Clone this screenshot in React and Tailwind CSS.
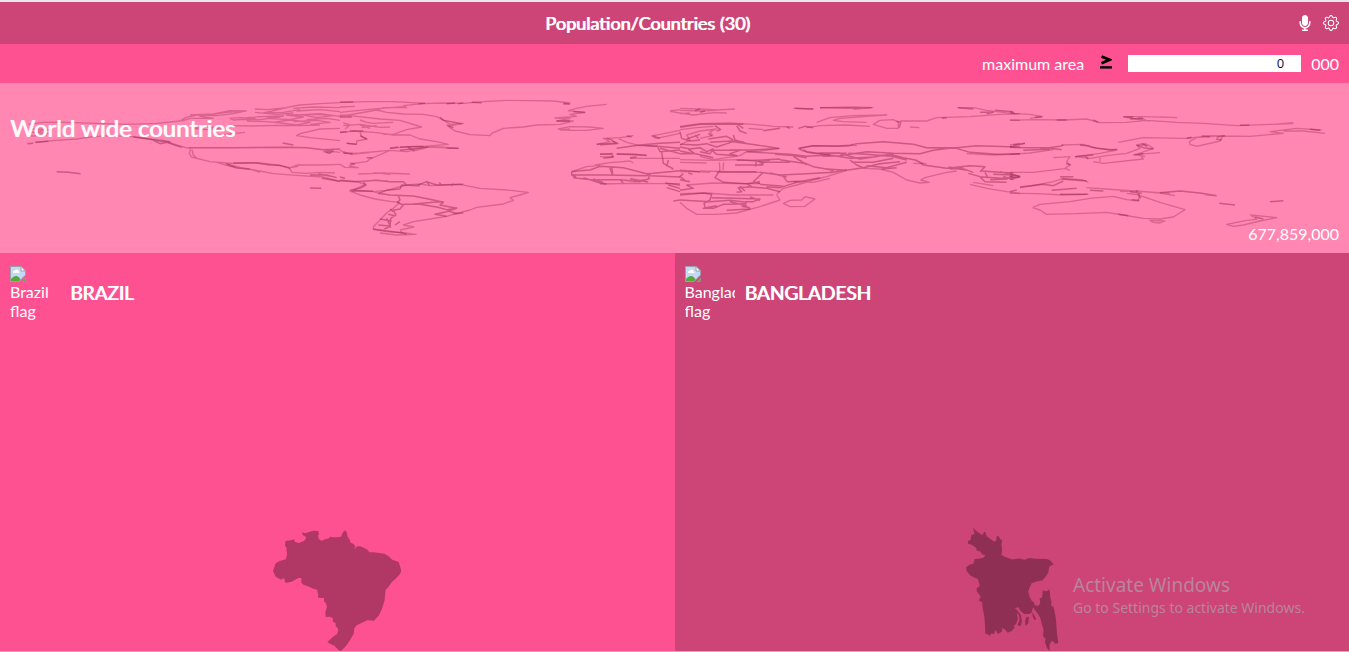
import { FaMicrophone } from "react-icons/fa";
import { BsGear } from "react-icons/bs";

const worldOutline = [
  {
    offset: 0,
    faint: [
      "M85 118L130 112 200 112 290 115 380 118 470 115 540 108 556 98 590 90 640 88",
      "M90 132L150 134 96 142 150 146 M82 154L140 150",
      "M106 172L160 167 230 162 280 155 340 152 400 155 450 162 490 166 530 180 565 190",
      "M545 108L570 100 640 100 600 94 680 82 735 78 700 86 650 92 610 92",
      "M570 90L640 87 690 77 740 78",
      "M690 100L720 98 765 101 700 105Z M740 98L800 94 840 96 780 104 720 104",
      "M765 72L800 74 860 68 790 84 850 82 900 74 M765 82L830 88 880 84 M860 67L900 60 960 56 1020 53",
      "M775 95L850 93 800 100 870 104 910 96 860 90 950 88 1000 92 950 98 900 88",
      "M820 112L870 105 930 112 890 120 840 114 M880 110L950 106 990 112 930 118",
      "M880 70L940 66 1020 68 M890 78L960 74 1020 80 M900 90L960 86 1020 94 M920 104L980 100 1020 106",
      "M740 108L800 110 860 116 M690 122L760 123 830 121 900 122 960 120",
      "M580 130L620 125 660 130 620 134Z M650 152L690 147 735 142",
      "M1020 130L960 132 900 146 890 152 930 158 990 164 1020 167",
      "M572 190L568 205 574 216 630 230 700 235 770 233 830 240 870 248",
      "M576 194L580 210 590 218",
      "M650 232L690 244 740 250 780 262 M675 235L720 247 780 258 820 266 900 272 970 276 1020 290",
      "M1020 238L960 240 890 240 868 250 876 262 920 265 960 262 1005 264",
      "M870 248L895 244 M980 203L1000 200 1020 202",
    ],
    strong: [
      "M82 176L100 175", "M106 172L145 169", "M170 260L205 262 242 266",
      "M400 156L450 163 500 172 545 187", "M460 166L510 170 480 176Z",
      "M565 188L700 188 860 187 920 188 970 194 1020 192",
      "M700 234L770 234 810 240 840 241 870 250", "M680 237L710 249 750 253",
      "M848 174L880 180", "M972 200L1000 196 988 205Z",
      "M930 270L980 270 1010 278 M955 267L990 273 M965 280L1020 289", "M930 309L964 310",
    ],
  },
  {
    offset: 1020,
    faint: [
      "M0 52L80 50 160 50 255 55 190 62 200 68 130 68 110 75 140 82 190 87 250 88 290 95 310 105 330 118 370 115 325 124 345 138 390 149 450 152 455 145 490 130 550 126 590 120 660 118 700 108 650 108 690 100 645 99 710 94 690 88 735 83 685 77 710 70 740 64 800 58",
      "M250 56L310 54 370 55 430 50 500 46 570 47 640 48 690 54 670 58",
      "M0 66L45 64 M0 82L50 77 120 70 190 65 M0 94L60 84 110 75 M0 90L50 94 120 102 180 106 245 126 200 134 160 148 130 148",
      "M10 122L60 118 120 127 150 126 M60 105L80 112 100 115 160 112 M60 120L90 130 M65 128L110 122",
      "M0 143L40 138 110 143 160 150 210 150 240 162 290 170 325 178 250 184 210 185 150 190",
      "M10 114L30 120 15 132 M60 140L65 155 82 162 50 168 50 178 20 175",
      "M0 195L15 205 60 204 150 196 200 200 265 186 355 190 300 186 250 184 M200 184L220 198 260 188",
      "M10 200L35 208 90 203 M150 196L90 222 80 230 40 235 28 243 55 248 15 247 0 238",
      "M55 267L125 264 210 267 M100 263L150 268",
      "M0 285L50 290 75 298 40 316 100 320 120 326",
      "M28 318L60 330 105 342 150 349 180 352",
      "M100 320L140 316 200 300 240 297 270 302 360 298 420 310 500 315 565 322 540 330 510 338 520 346 490 357 410 367 390 375 350 385 320 394 270 402 220 410 190 420 222 426 180 435",
      "M655 132L690 125 750 126 790 130 740 136 690 136Z M660 135L690 132",
      "M180 352L160 370 140 384 120 405 100 425 100 433 140 440 190 443 228 448 170 450 120 444",
      "M990 78L1020 74 M990 79L1020 84 M1020 136L960 148 935 153 950 160 1020 145",
      "M770 178L810 170 790 160 840 158 870 154 M780 180L835 176 815 167",
      "M780 208L820 205 M780 215L820 216 M830 207L880 207 920 212 M870 220L1020 220",
      "M860 155L880 152 M835 160L860 172 900 182 950 184",
      "M765 240L810 233 870 228 880 234 M695 260L740 245 780 241 M780 297L870 295 950 296 1020 296",
    ],
    strong: [
      "M0 52L40 51 M235 56L255 55 M320 56L345 54 M355 56L370 53 M395 52L425 53 M670 55L690 58",
      "M300 97L310 106 365 116 M320 120L340 128", "M650 108L690 108 M700 80L735 82",
      "M0 96L35 96 M0 142L20 140 M30 138L70 138",
      "M60 152L80 162 M20 175L50 178 M150 190L175 186 M180 186L250 184 M180 196L265 186 M320 190L355 190 M205 186L222 196",
      "M30 235L45 238 M80 218L98 218 M10 204L38 206 M0 276L15 280",
      "M0 287L45 290 110 286 150 290 190 290 200 300 240 302 M120 287L145 289",
      "M70 292L78 300 60 310 30 316 M35 319L65 317 100 319",
      "M115 325L140 316 180 312 185 300 230 302 260 290 290 300 370 298",
      "M258 288L268 300 M298 292L305 302 M340 296L335 303",
      "M115 325L150 330 220 333 280 345 310 352 300 360 350 370 320 380 285 388 320 394 M350 368L325 378 355 387",
      "M175 333L180 345 172 352 190 360 180 372 160 376 168 390 152 400 150 425 133 432",
      "M190 358L240 358 290 366 M220 357L280 352 310 350 M290 366L320 374 350 370",
      "M150 372L160 380 M145 388L165 392 M120 402L155 408 M115 420L150 423 M100 432L180 443 200 446 M140 400L152 428 M180 410L165 420",
      "M180 440L195 447 M340 386L370 384",
      "M770 178L830 175 810 162 M800 160L820 166 M860 153L875 155",
      "M780 207L815 208 820 216 790 220 M830 190L900 180 950 184 1020 190 M900 180L960 175 1020 172 M940 153L960 160",
      "M830 207L920 211 M870 218L890 216 M950 180L960 200 1020 195 M960 190L1020 206 M965 200L970 235 1000 252 M985 225L980 245",
      "M695 260L720 257 750 255 780 244 850 248 920 266 940 265 1020 257 M695 260L695 270 710 280 700 268",
      "M808 245L818 270 M815 245L818 268 M695 270L800 270 920 272 930 266",
      "M700 278L760 285 800 284 840 284 900 290 930 280 M730 278L780 294 800 297 M760 282L790 293 M840 284L850 294 M870 281L925 291 M880 290L925 283",
      "M930 266L925 280 M930 272L1020 276 M975 294L1020 300 M980 308L1020 320 M1000 348L1020 345 M985 300L1020 310",
    ],
  },
  {
    offset: 2040,
    faint: [
      "M0 70L60 72 110 75 165 72 M0 84L40 90 100 83 140 84 M0 76L60 78 110 76 M0 86L30 84",
      "M0 124L60 116 150 114 220 118 280 124 340 126 M0 134L50 128 100 124 M205 130L250 134",
      "M0 180L30 165 20 150 60 138 110 132 90 140 98 152 60 160",
      "M410 112L450 98 520 92 620 90 560 94 480 100 460 106 490 110 560 112",
      "M380 128L420 122 500 120 570 124 M580 118L600 106 640 104 655 112 655 130 620 130Z M690 126L718 128",
      "M660 108L740 108 770 98 870 95 960 88 1020 86 M990 105L1020 106",
      "M340 70L400 72 M420 68L520 66 580 68 M832 68L880 68 920 76 1000 86",
      "M300 190L240 198 200 200 180 212 100 224 60 214",
      "M370 192L380 202 450 210 390 204 M360 190L400 182 470 183 520 180",
      "M0 224L100 226 180 224 240 230 270 226 M0 232L80 234",
      "M118 232L120 256 M131 232L129 256",
      "M60 258L140 260 240 262 M0 260L50 260 90 262 M20 300L100 294 170 296 240 296",
      "M0 352L20 370 50 388 110 388 170 384 240 365 300 345 290 330",
      "M550 250L600 252 640 262 680 285 720 294 748 292 722 285 735 278 800 262 830 258",
      "M500 256L440 275 400 285 350 300 310 310 290 328",
      "M310 355L330 365 375 364 405 342 375 335 365 345 330 346Z",
      "M870 298L920 310 980 320 1020 325 M880 292L940 302 M990 180L1020 175 M860 206L940 210 1020 207",
      "M340 290L400 292 450 280 M700 235L740 236",
      "M0 326L80 324 160 330 230 330 280 330",
    ],
    strong: [
      "M45 77L60 72 M60 82L75 78 M345 70L400 72 M420 68L540 70 M520 72L575 68 M835 68L880 72 M900 82L940 82 920 86 M945 76L1000 80",
      "M0 127L60 118 130 118 190 118 M170 122L180 138 200 145 M175 120L190 130 M105 122L122 134 110 138 M250 137L300 130 M320 126L330 130 M355 130L375 124 400 128",
      "M0 140L5 160 30 168 60 165 M20 162L60 148 M45 150L55 160 M85 145L95 153 M85 162L140 154 160 165 M90 172L155 168 190 170 M160 150L165 165 210 178",
      "M0 178L50 180 80 176 110 186 160 170 230 180 295 190 220 195 150 195",
      "M0 186L30 192 60 188 80 200 100 192 90 206 60 200 M95 195L180 196 150 206 170 212 110 208Z M0 198L40 206 0 206 M25 193L45 206 M40 205L100 218",
      "M200 200L330 208 380 214 450 210 420 204 500 205",
      "M355 190L400 182 470 184 510 182 530 176 610 170 700 178 740 188 830 188 890 182 1020 186",
      "M355 190L370 198 410 205 480 204 M515 178L530 182 M740 188L830 190 870 202 950 208 1020 206",
      "M420 204L430 214 480 212 560 200 640 205 720 206 760 196 820 188",
      "M450 210L510 220 580 216 630 208 670 218 710 226 M505 205L560 208 630 214 M480 206L540 222 580 216",
      "M510 225L530 240 550 248 600 236 660 230 M515 232L580 232 640 220 M600 212L640 210 M560 242L620 248 680 232 M605 252L650 248",
      "M340 214L370 232 400 245 460 256 M340 214L380 240 M300 224L380 236 M315 208L380 218 M285 208L350 212",
      "M170 226L230 226 300 222 M165 240L250 240 M230 230L225 242 250 236 235 228 M240 232L330 232",
      "M240 262L300 270 380 266 460 262 500 254 M250 262L220 290 240 296 M270 264L320 276 M310 275L322 290 380 288 M460 255L450 265 M440 252L500 256 550 248",
      "M0 256L60 260 M120 256L105 278 130 292 200 296 M10 266L0 275 20 290 M0 284L30 290 M25 264L38 268",
      "M110 262L230 260 M240 290L200 296 215 305 175 308 185 320 170 322 M200 305L260 310 300 320 M180 304L195 318 M240 298L310 304",
      "M0 316L40 310 20 300 M0 330L70 324 95 328 90 345 72 355 76 370 M0 345L90 350 150 346 200 352",
      "M95 338L160 340 240 342 220 350 195 350 M110 362L70 370 100 370 130 358 200 356 M210 336L240 346 M140 376L210 372 190 358 M185 364L210 368 M150 350L200 362",
      "M260 305L300 308 350 292 420 278 M710 226L730 240 800 250 870 242 915 245 900 260",
      "M630 212L680 225 M705 225L730 236 M805 246L860 256 M810 252L850 250 M840 248L880 262 M650 108L662 112 658 128 M786 100L800 98",
      "M905 258L960 262 1000 264 M900 275L960 280 1020 276 M915 262L925 280 M940 268L1000 270 980 282 930 284 M960 260L1020 274 M970 274L1000 284",
      "M865 265L900 275 915 290 980 292",
    ],
  },
  {
    offset: 3030,
    faint: [
      "M0 85L60 88 98 95 60 100 M0 106L80 104 160 105 230 102 270 113 350 112 410 106 500 112 580 115 680 122 780 118 850 116",
      "M340 95L400 95 500 98 450 96 M350 98L420 108 M385 98L410 106",
      "M325 172L400 158 530 160 600 152 720 154 820 145 780 140 860 130 935 135 M820 138L880 138 945 145 M790 118L850 113",
      "M538 170L560 158 640 152 630 168 560 184 540 178Z",
      "M0 186L45 175 M0 208L60 204 130 194 M155 180L220 178 260 190 320 195 270 205 195 215",
      "M130 218L180 215 170 230 180 240 165 250 180 256 M0 262L70 262 170 250",
      "M200 215L240 220 290 212 350 205 390 190 380 180 415 180 430 190 380 208 450 203 M250 230L280 235 400 222 390 210",
      "M270 230L270 218 M385 178L410 176 M375 208L405 215",
      "M30 308L80 300 130 290 160 280 220 285 235 292 M0 325L80 326 160 330 230 328",
      "M68 368L90 358 180 350 240 340 310 334 350 344 385 348 388 330 350 325 M68 368L90 375 110 388 200 386 290 382 340 390 400 400 450 402 490 396 525 374 450 352 390 332",
      "M420 406L465 408 450 414 430 412Z",
      "M230 308L330 315 480 325 M330 320L380 318 450 324 495 332",
      "M650 418L710 406 740 403 722 390 800 398 750 408 700 420 670 424Z",
    ],
    strong: [
      "M0 80L15 86 M75 97L95 95 M140 105L170 105 M250 105L265 112 M360 102L400 100 M690 121L718 121 M900 133L930 136 M340 96L370 96",
      "M575 153L600 155 M618 162L635 165 M530 160L545 157 M645 152L620 156",
      "M0 187L50 188 110 188 155 194 M90 192L150 184 160 180 M40 196L120 193 M10 180L45 175 M210 180L240 184 M240 186L300 195 322 193",
      "M195 215L250 210 M235 222L225 213 M168 235L182 240 M380 180L400 188 430 192 M370 210L400 206 M395 175L412 184",
      "M0 268L30 275 0 284 M0 274L20 278 M30 306L100 298 130 302 M150 275L190 275 M155 282L230 288 M125 316L200 310 M130 302L160 288",
      "M0 320L20 315 M150 328L235 328 M240 316L280 318 M380 316L392 340 M360 320L395 325",
      "M450 323L510 318 570 324 620 332 M580 328L620 332 M628 355L675 360 M780 350L820 347 M325 388L355 392 M735 396L760 402 M365 344L388 346",
    ],
  },
];

function WorldMap() {
  return (
    <svg
      viewBox="0 0 1349 170"
      preserveAspectRatio="none"
      aria-hidden="true"
      className="pointer-events-none absolute inset-0 size-full"
    >
      <g transform="translate(0 2) scale(0.33333)" fill="none" stroke="#90204f" strokeLinejoin="round">
        {worldOutline.map((part) => (
          <g key={part.offset} transform={`translate(${part.offset} 0)`}>
            <path d={part.faint.join("")} strokeWidth="4" strokeOpacity="0.34" />
            <path d={part.strong.join("")} strokeWidth="4.4" strokeOpacity="0.46" />
          </g>
        ))}
      </g>
    </svg>
  );
}

function BrazilShape() {
  return (
    <svg viewBox="42 30 384 363" aria-hidden="true" className="w-32 fill-black/30">
      <path d="M128 37L139 40 150 36 162 32 178 33 180 42 177 48 180 58 188 62 198 58 210 55 214 50 222 52 236 52 246 50 252 36 258 31 263 36 266 50 273 60 273 67 284 72 289 79 286 88 294 79 304 79 314 83 324 88 331 97 345 97 376 101 388 108 400 119 419 126 423 138 427 152 423 162 410 176 398 187 388 202 380 209 377 240 369 266 360 286 345 302 325 301 306 310 294 315 286 325 284 342 272 362 259 380 246 393 239 391 226 377 214 372 205 366 222 350 234 342 238 330 234 322 230 320 230 309 222 306 221 294 213 290 200 291 199 276 204 260 200 248 195 245 195 234 177 233 177 222 174 209 163 206 146 199 133 194 127 188 127 174 118 174 98 185 79 189 75 174 66 179 50 170 42 153 50 130 60 124 80 118 84 104 82 82 78 78 79 63 96 61 105 58 108 66 120 69 136 62 142 52 132 46Z" />
    </svg>
  );
}

function BangladeshShape() {
  return (
    <svg viewBox="48 22 275 371" aria-hidden="true" className="w-23 fill-black/30">
      <path d="M68 22L76 32 90 42 98 46 102 36 106 38 110 50 124 60 132 66 138 62 140 50 146 50 150 58 156 62 154 76 156 90 154 106 162 110 186 119 206 116 224 120 236 115 256 117 290 118 300 122 310 134 297 140 294 158 288 168 276 182 262 184 244 190 238 204 234 214 237 228 244 242 250 246 254 256 264 258 270 250 268 236 276 232 277 212 288 214 298 209 300 234 304 246 302 256 310 262 316 290 318 312 320 340 324 368 316 372 306 362 298 372 298 393 290 384 284 366 286 356 278 348 280 330 274 310 270 294 262 280 254 270 248 262 244 278 236 282 222 282 210 272 205 262 194 264 204 274 212 286 215 302 212 318 202 316 208 300 206 284 200 280 203 296 198 312 190 318 194 322 186 332 172 338 164 328 156 324 156 334 144 342 136 330 132 342 124 340 118 348 112 342 106 342 105 318 103 290 98 266 96 246 86 242 92 230 80 214 80 204 89 198 84 178 74 174 62 168 50 154 48 142 60 134 70 132 74 118 86 117 100 114 106 106 96 104 92 96 80 92 78 84 66 76 54 72 54 64 62 60 64 46 74 42Z" />
      <path d="M246 277L252 286 258 298 252 300 247 288Z M229 290L236 292 234 310 226 318 225 302Z" />
    </svg>
  );
}

function BrokenImage() {
  return (
    <svg viewBox="0 0 16 16" aria-hidden="true" className="size-4">
      <path d="M0.500 0.500H11L15.500 5V9L9 15.500H0.500Z" fill="#c3d9f7" stroke="#9aa0a6" />
      <path d="M11 0.500V5H15.500Z" fill="#fff" stroke="#9aa0a6" />
      <path d="M3 6.500C3 5 4 4.500 5 4.500C6 2.500 9 3.500 8.500 5.500C10 5.500 10 7 9 7H3Z" fill="#fff" />
      <path d="M1 15V13C4 9.500 7 9 9.500 12L10.500 13.500 9 15Z" fill="#55a83a" />
      <path d="M12 15.500L15.500 12V15.500Z" fill="#55a83a" stroke="#9aa0a6" strokeWidth="0.600" />
    </svg>
  );
}

const countries = [
  { name: "Brazil", tone: "bg-[#fe5191]", Shape: BrazilShape },
  { name: "Bangladesh", tone: "bg-[#cd4477]", Shape: BangladeshShape },
];

function CountryCard({ name, tone, Shape }) {
  return (
    <a href={`#${name.toLowerCase()}`} className={`flex flex-col justify-between ${tone}`}>
      <div className="flex items-center gap-2.5 px-2.5 pt-3.25">
        <div className="w-12.5 overflow-hidden leading-[19px]">
          <BrokenImage />
          <span>{name} flag</span>
        </div>
        <h3 className="text-[19px] leading-7 font-normal uppercase [text-shadow:1px_0_#fff]">{name}</h3>
      </div>
      <div className="flex justify-center">
        <Shape />
      </div>
    </a>
  );
}

export default function App() {
  return (
    <div className="relative flex min-h-screen flex-col border-b border-[#b9b3b5] bg-[#fe5191] font-[Lato,sans-serif] text-base text-white">
      <header className="flex h-11 items-center border-t-2 border-[#ece6e9] bg-[#cd4477] px-2.5">
        <h1 className="flex-1 pr-3 text-center text-lg font-normal [text-shadow:1px_0_#fff]">
          Population/Countries (30)
        </h1>
        <div className="flex items-center gap-2.5">
          <button type="button" aria-label="Voice search">
            <FaMicrophone className="size-4" />
          </button>
          <button type="button" aria-label="Settings">
            <BsGear className="size-4" />
          </button>
        </div>
      </header>

      <form className="flex h-[39px] items-center justify-end px-2.5">
        <label htmlFor="max-area">maximum area</label>
        <svg viewBox="0 0 12 14" role="img" aria-label="greater than or equal to" className="mx-4 mb-1 h-3.5 w-3">
          <path d="M1.500 1.500L9.500 4.800L1.500 8.200" fill="none" stroke="#000" strokeWidth="2.800" />
          <path d="M0 11.200H12V13.600H0Z" fill="#000" />
        </svg>
        <input
          id="max-area"
          type="number"
          defaultValue="0"
          className="h-[17px] w-[173px] bg-white pr-0.5 text-right font-['Open_Sans',sans-serif] text-[13px] text-[#0b0b3b]"
        />
        <span className="ml-2.5">000</span>
      </form>

      <section className="relative flex h-[170px] flex-col justify-between bg-[#ff87b2] px-2.5 pt-7 pb-2">
        <WorldMap />
        <h2 className="relative text-2xl leading-[34px] font-normal text-white/90 [text-shadow:1px_0_rgb(255_255_255/0.9)]">
          World wide countries
        </h2>
        <p className="relative text-right leading-[22px]">677,859,000</p>
      </section>

      <main className="grid flex-1 grid-cols-2">
        {countries.map((country) => (
          <CountryCard key={country.name} {...country} />
        ))}
      </main>

      <aside className="pointer-events-none absolute right-10 bottom-8 w-[236px] font-['Noto_Sans',sans-serif] whitespace-nowrap text-[#b9849c]">
        <p className="text-[19px] leading-6">Activate Windows</p>
        <p className="text-sm leading-[22px]">Go to Settings to activate Windows.</p>
      </aside>
    </div>
  );
}
